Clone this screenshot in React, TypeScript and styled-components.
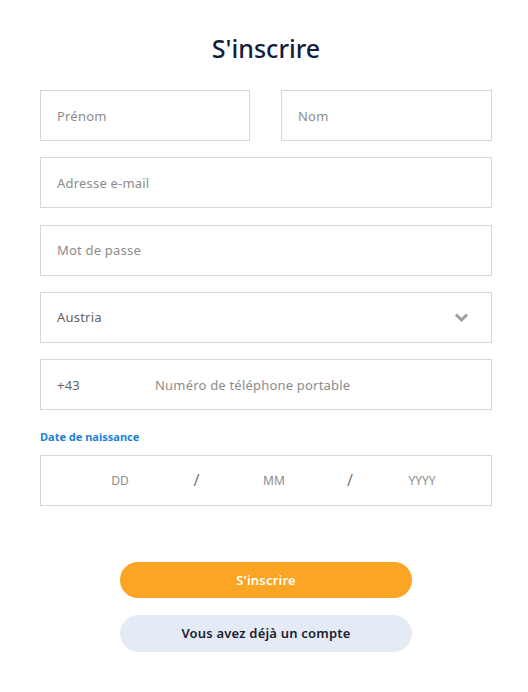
import React from "react";
import styled, { createGlobalStyle } from "styled-components";

const GlobalStyle = createGlobalStyle`
  body {
    margin: 0;
    background: #ffffff;
    font-family: "Noto Sans", "Open Sans", sans-serif;
  }
`;

const Page = styled.div`
  width: 528px;
  padding: 30px 36px 0 40px;
  box-sizing: border-box;
`;

const Title = styled.h1`
  margin: 0 0 24px;
  text-align: center;
  font-size: 25px;
  font-weight: 500;
  color: #121d3e;
  line-height: 36px;
`;

const Form = styled.div`
  display: flex;
  flex-direction: column;
  gap: 16.25px;
  width: 452px;
`;

const Row = styled.div`
  display: grid;
  grid-template-columns: 210px 211px;
  justify-content: space-between;
`;

const Field = styled.div`
  height: 51px;
  box-sizing: border-box;
  border: 1px solid #d7d7d7;
  display: flex;
  align-items: center;
  padding: 0 16px;
  font-size: 13px;
  letter-spacing: 0.2px;
  color: #8c8c8c;
`;

const Value = styled.span<{ $w?: number }>`
  color: #666;
  width: ${(p) => (p.$w ? `${p.$w}px` : "auto")};
`;

const Chevron = styled.svg`
  margin-left: auto;
  margin-right: 6px;
  display: block;
`;

const Label = styled.div`
  margin-top: 3px;
  margin-bottom: -6px;
  font-size: 11px;
  font-weight: 700;
  color: #1d7fdb;
`;

const DateBox = styled.div`
  height: 51px;
  box-sizing: border-box;
  border: 1px solid #d7d7d7;
  display: grid;
  grid-template-columns: 76px 77px 78px 74px 70px;
  align-items: center;
  padding-left: 41px;
  font-size: 12px;
  color: #8c8c8c;
  text-align: center;
`;

const Slash = styled.span`
  font-size: 16px;
  color: #777;
`;

const Actions = styled.div`
  display: flex;
  flex-direction: column;
  align-items: center;
  gap: 17px;
  margin-top: 56px;
  width: 452px;
`;

const Button = styled.button<{ $primary?: boolean }>`
  width: 292px;
  height: ${(p) => (p.$primary ? "36px" : "37px")};
  border: none;
  border-radius: 19px;
  font-family: inherit;
  font-size: 13px;
  font-weight: 600;
  letter-spacing: 0.2px;
  background: ${(p) => (p.$primary ? "#fba524" : "#e5ebf5")};
  color: ${(p) => (p.$primary ? "#ffffff" : "#1b2130")};
`;

export default function App() {
  return (
    <>
      <GlobalStyle />
      <Page>
        <Title>S'inscrire</Title>
        <Form>
          <Row>
            <Field>Prénom</Field>
            <Field>Nom</Field>
          </Row>
          <Field>Adresse e-mail</Field>
          <Field>Mot de passe</Field>
          <Field>
            <Value>Austria</Value>
            <Chevron width="15" height="11" viewBox="0 0 15 11">
              <polyline
                points="2,2.5 7.5,8 13,2.5"
                fill="none"
                stroke="#9d9d9d"
                strokeWidth="3"
              />
            </Chevron>
          </Field>
          <Field>
            <Value $w={98}>+43</Value>
            Numéro de téléphone portable
          </Field>
          <Label>Date de naissance</Label>
          <DateBox>
            <span>DD</span>
            <Slash>/</Slash>
            <span>MM</span>
            <Slash>/</Slash>
            <span>YYYY</span>
          </DateBox>
        </Form>
        <Actions>
          <Button $primary>S'inscrire</Button>
          <Button>Vous avez déjà un compte</Button>
        </Actions>
      </Page>
    </>
  );
}
